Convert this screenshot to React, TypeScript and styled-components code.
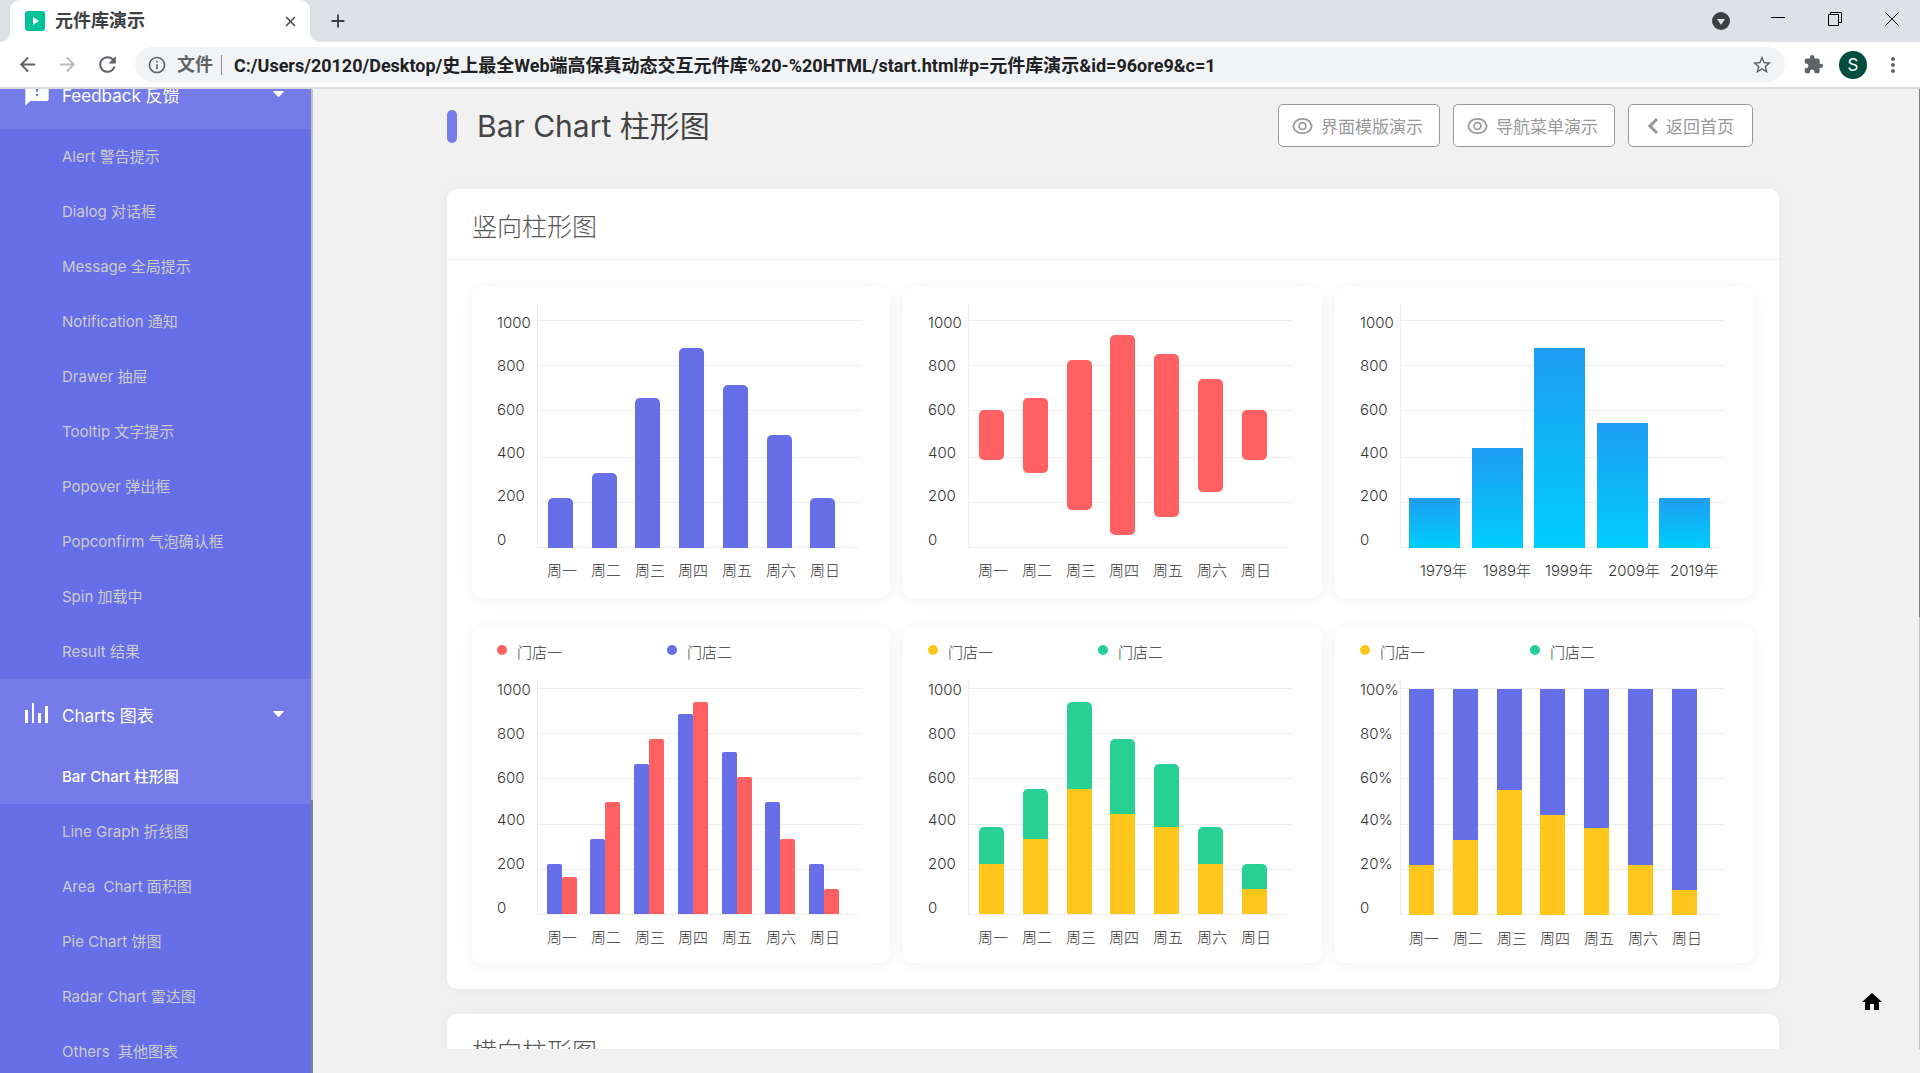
import React from "react";
import styled, { createGlobalStyle } from "styled-components";
import { MdArrowBack, MdArrowForward, MdRefresh, MdClose, MdAdd, MdInfoOutline, MdStarBorder, MdExtension, MdMoreVert, MdFeedback, MdHome } from "react-icons/md";

const ui = `Inter, "Noto Sans CJK SC", sans-serif`;
const chromeFont = `Roboto, "Noto Sans CJK SC", sans-serif`;
const blue = "#666ee8";
const red = "#ff6163";
const yellow = "#ffc71c";
const green = "#28d094";

const GlobalStyle = createGlobalStyle`
  * { box-sizing: border-box; }
  body { margin: 0; background: #f1f1f1; font-family: ${ui}; }
  button { font: inherit; color: inherit; border: 0; background: none; padding: 0; cursor: pointer; }
  a { color: inherit; text-decoration: none; }
  ul { list-style: none; margin: 0; padding: 0; }
  h1, h2 { margin: 0; font-weight: 400; }
  svg { display: block; flex: none; }
`;

const Browser = styled.div`
  display: flex;
  flex-direction: column;
  height: 100vh;
  overflow: hidden;
`;

const TabStrip = styled.div`
  display: flex;
  align-items: center;
  height: 42px;
  flex: none;
  padding: 0 0 0 10px;
  background: #dee1e6;
  color: #3c4043;
  font-family: ${chromeFont};
`;

const Tab = styled.div`
  position: relative;
  display: flex;
  align-items: center;
  gap: 10px;
  width: 300px;
  height: 42px;
  padding: 0 12px 0 15px;
  background: #fff;
  border-radius: 10px 10px 0 0;
  font-size: 18px;
  font-weight: 700;
  &::before, &::after {
    content: "";
    position: absolute;
    bottom: 0;
    width: 10px;
    height: 10px;
  }
  &::before { right: 100%; background: radial-gradient(circle at 0 0, transparent 10px, #fff 10px); }
  &::after { left: 100%; background: radial-gradient(circle at 100% 0, transparent 10px, #fff 10px); }
`;

const TabTitle = styled.span`
  flex: 1;
  line-height: 22px;
`;

const IconButton = styled.button<{ $w?: number }>`
  display: flex;
  align-items: center;
  justify-content: center;
  width: ${(p) => p.$w ?? 40}px;
  height: 32px;
  flex: none;
`;

const TabSearch = styled(IconButton)`
  margin-left: auto;
`;

const WindowControls = styled.div`
  display: flex;
  align-items: center;
  align-self: flex-start;
  height: 37px;
`;

const Toolbar = styled.div`
  display: flex;
  align-items: center;
  height: 47px;
  flex: none;
  padding: 0 7px;
  background: #fff;
  border-bottom: 2px solid #d9dbdf;
  color: #5f6368;
`;

const AddressBar = styled.form`
  display: flex;
  align-items: center;
  flex: 1;
  height: 35px;
  margin: 0 8px;
  padding: 0 12px;
  border-radius: 18px;
  background: #f1f3f4;
  font: 700 18px ${chromeFont};
`;

const Scheme = styled.label`
  padding: 0 8px 0 10px;
  margin-right: 12px;
  border-right: 1px solid #85888c;
  line-height: 20px;
`;

const UrlInput = styled.input`
  flex: 1;
  min-width: 0;
  height: 34px;
  padding: 0 0 2px;
  border: 0;
  outline: 0;
  background: none;
  color: #202124;
  font: 700 18px ${chromeFont};
`;

const Avatar = styled.button`
  width: 28px;
  height: 28px;
  margin: 0 6px;
  border-radius: 50%;
  background: #004d40;
  color: #fff;
  font-size: 17px;
`;

const Body = styled.div`
  display: flex;
  flex: 1;
  min-height: 0;
`;

const Sidebar = styled.nav`
  width: 313px;
  flex: none;
  overflow: hidden;
  border-right: 2px solid;
  border-image: linear-gradient(#c1c1c1 711px, #808080 711px) 1;
  background: ${blue};
`;

/* The menu is scrolled part of the way into the Feedback group. */
const Menu = styled.ul`
  margin-top: -30px;
`;

const GroupButton = styled.button`
  display: flex;
  align-items: center;
  width: 100%;
  height: 70px;
  padding: 0 27px 0 23px;
  background: #757cea;
  color: #fff;
  font-size: 17px;
`;

const GroupIcon = styled.span`
  display: flex;
  width: 39px;
`;

const GroupLabel = styled.span`
  flex: 1;
  text-align: left;
`;

const MenuLink = styled.a<{ $active?: boolean }>`
  display: block;
  height: 55px;
  padding-left: 62px;
  line-height: 55px;
  font-size: 15px;
  white-space: pre;
  color: ${(p) => (p.$active ? "#fff" : "#ccc")};
  font-weight: ${(p) => (p.$active ? 500 : 400)};
  background: ${(p) => (p.$active ? "#757cea" : "transparent")};
`;

const Main = styled.main`
  flex: 1;
  min-width: 0;
  margin-bottom: 24px;
  padding: 15px 140px 0 134px;
  overflow: hidden;
  border-right: 1px solid;
  border-image: linear-gradient(#7d7d7d 528px, #c1c1c1 528px) 1;
`;

const PageHeader = styled.header`
  display: flex;
  align-items: center;
  gap: 13px;
  height: 43px;
  margin-bottom: 42px;
  padding-right: 26px;
`;

const PageTitle = styled.h1`
  display: flex;
  align-items: center;
  gap: 20px;
  margin-right: auto;
  padding-top: 2px;
  font-size: 30px;
  font-weight: 400;
  line-height: 43px;
  color: #444;
  &::before {
    content: "";
    width: 10px;
    height: 33px;
    border-radius: 5px;
    background: #757cea;
  }
`;

const HeaderButton = styled.button<{ $back?: boolean }>`
  display: flex;
  align-items: center;
  gap: ${(p) => (p.$back ? 7 : 8)}px;
  height: 43px;
  padding: ${(p) => (p.$back ? "0 18px" : "0 16px 0 13px")};
  border: 1px solid #999;
  border-radius: 5px;
  background: #fff;
  color: #999;
  font-size: 17px;
`;

const Panel = styled.section`
  margin-bottom: 25px;
  border-radius: 10px;
  background: #fff;
  box-shadow: 0 0 12px rgba(0, 0, 0, 0.04);
`;

const PanelTitle = styled.h2`
  height: 71px;
  padding: 0 25px;
  border-bottom: 1px solid #ececec;
  font-size: 25px;
  font-weight: 300;
  line-height: 76px;
  color: #555;
`;

const ChartGrid = styled.div`
  display: grid;
  grid-template-columns: 418fr 419fr 419fr;
  gap: 29px 13px;
  padding: 27px 25px 26px;
`;

const ChartCard = styled.figure`
  margin: 0;
  border-radius: 10px;
  background: #fff;
  box-shadow: 0 2px 16px rgba(0, 0, 0, 0.06);
`;

const ChartSvg = styled.svg`
  font-family: ${ui};
  font-size: 15px;
  font-weight: 300;
  fill: #333;
`;

const HomeLink = styled.a`
  position: fixed;
  right: 36px;
  bottom: 59px;
  color: #000;
`;

const days = ["周一", "周二", "周三", "周四", "周五", "周六", "周日"];
const years = ["1979年", "1989年", "1999年", "2009年", "2019年"];
const thousand = ["1000", "800", "600", "400", "200", "0"];
const percent = ["100%", "80%", "60%", "40%", "20%", "0"];

type Bar = { x: number; y: number; w: number; h: number; fill: string; r?: number; round?: "top" | "all" };

function BarShape({ x, y, w, h, fill, r = 0, round = "top" }: Bar) {
  if (round === "all") return <rect x={x} y={y} width={w} height={h} rx={r} fill={fill} />;
  return <path d={`M${x} ${y + h}V${y + r}a${r} ${r} 0 0 1 ${r} ${-r}h${w - 2 * r}a${r} ${r} 0 0 1 ${r} ${r}V${y + h}z`} fill={fill} />;
}

type ChartProps = {
  name: string;
  bars: Bar[];
  yLabels?: string[];
  xLabels?: string[];
  xStart?: number;
  xStep?: number;
  xBase?: number;
  legend?: [string, string];
};

function Chart({ name, bars, yLabels = thousand, xLabels = days, xStart = 75, xStep = 43.8, xBase, legend }: ChartProps) {
  const lines = legend ? [61, 106, 151, 197, 242, 287] : [33, 78, 123, 170, 215, 260];
  const labels = legend ? [68, 112, 156, 198, 242, 286] : [41, 84, 128, 171, 214, 258];
  const height = legend ? 336 : 311;
  const base = xBase ?? (legend ? 316 : 289);
  return (
    <ChartCard>
      <ChartSvg width={418} height={height} role="img" aria-label={name}>
        {legend?.map((color, i) => (
          <g key={color}>
            <circle cx={30 + i * 170} cy={23} r={5} fill={color} />
            <text x={45 + i * 170} y={31}>{i ? "门店二" : "门店一"}</text>
          </g>
        ))}
        {lines.map((y, i) => <rect key={y} x={65} y={y} width={i === 5 ? 321 : 325} height={1} fill="#ededed" />)}
        <rect x={65} y={lines[0] - (legend ? 8 : 16)} width={1} height={legend ? 234 : 244} fill="#ededed" />
        {bars.map((bar, i) => <BarShape key={i} {...bar} />)}
        {yLabels.map((label, i) => <text key={label} x={25} y={labels[i]}>{label}</text>)}
        {xLabels.map((label, i) => <text key={label} x={Math.round(xStart + i * xStep)} y={base}>{label}</text>)}
      </ChartSvg>
    </ChartCard>
  );
}

const column = (bottom: number, w: number, fill: string, r: number) => (xs: number[], tops: number[]): Bar[] =>
  tops.map((y, i) => ({ x: xs[i], y, w, h: bottom - y, fill, r }));

const simple = column(261, 25, blue, 5)([76, 120, 163, 207, 251, 295, 338], [211, 186, 111, 61, 98, 148, 211]);
const slotX = [76, 120, 164, 207, 251, 295, 339];
const ranges: Bar[] = [[123, 173], [111, 186], [73, 223], [48, 248], [67, 230], [92, 205], [123, 173]].map(([a, b], i) => ({
  x: slotX[i], y: a, w: 25, h: b - a, fill: red, r: 5, round: "all",
}));
const wide = column(261, 51, "url(#sky)", 0)([74, 137, 199, 262, 324], [211, 161, 61, 136, 211]);
const pairX = [75, 118, 162, 206, 250, 293, 337];
const grouped = [
  ...column(287, 15, blue, 2)(pairX, [237, 212, 137, 87, 125, 175, 237]),
  ...column(287, 15, red, 2)(pairX.map((x) => x + 15), [250, 175, 112, 75, 150, 212, 262]),
];
const stacked = [
  ...column(287, 25, green, 5)(slotX, [200, 162, 75, 112, 137, 200, 237]),
  ...column(287, 25, yellow, 0)(slotX, [237, 212, 162, 187, 200, 237, 262]),
];
const shareX = [74, 118, 162, 205, 249, 293, 337];
const share = [
  ...column(288, 25, blue, 0)(shareX, [62, 62, 62, 62, 62, 62, 62]),
  ...column(288, 25, yellow, 0)(shareX, [238, 213, 163, 188, 201, 238, 263]),
];

const Caret = () => <svg width="11" height="6" fill="#fff"><path d="M1 0h9q1.400 0 .5 1L6.300 5.500q-.8.800-1.600 0L.5 1Q-.4 0 1 0z" /></svg>;
const BarsIcon = () => (
  <svg width="28" height="24" fill="#fff">
    <path d="M2 8h3v13H2zM9 1h2v20H9zM15 11h3v10h-3zM22 4h3v17h-3z" />
  </svg>
);
const Eye = () => (
  <svg width="21" height="18" viewBox="0 0 21 18" fill="none" stroke="#999" strokeWidth="1.700">
    <path d="M1.200 9C2.200 4.500 6 1.800 10.500 1.800S18.800 4.500 19.800 9c-1 4.500-4.800 7.200-9.300 7.200S2.200 13.500 1.200 9z" />
    <circle cx="10.500" cy="9" r="3.400" />
  </svg>
);
const Chevron = () => <svg width="12" height="18" fill="none" stroke="#999" strokeWidth="3"><path d="M10 2L3 9l7 7" /></svg>;

const feedback = ["Alert 警告提示", "Dialog 对话框", "Message 全局提示", "Notification 通知", "Drawer 抽屉", "Tooltip 文字提示", "Popover 弹出框", "Popconfirm 气泡确认框", "Spin 加载中", "Result 结果"];
const charts = ["Bar Chart 柱形图", "Line Graph 折线图", "Area  Chart 面积图", "Pie Chart 饼图", "Radar Chart 雷达图", "Others  其他图表"];

function MenuGroup({ icon, label, items, active }: { icon: React.ReactNode; label: string; items: string[]; active?: string }) {
  return (
    <li>
      <GroupButton type="button" aria-expanded="true">
        <GroupIcon>{icon}</GroupIcon>
        <GroupLabel>{label}</GroupLabel>
        <Caret />
      </GroupButton>
      <ul>
        {items.map((item) => (
          <li key={item}><MenuLink href="#" $active={item === active}>{item}</MenuLink></li>
        ))}
      </ul>
    </li>
  );
}

export default function App() {
  return (
    <Browser>
      <GlobalStyle />
      <TabStrip>
        <Tab>
          <svg width="20" height="20"><rect width="20" height="20" rx="3" fill="#00c39a" /><path d="M8 6l6 4-6 4z" fill="#fff" /></svg>
          <TabTitle>元件库演示</TabTitle>
          <IconButton $w={16} aria-label="关闭标签页"><MdClose size={17} /></IconButton>
        </Tab>
        <IconButton $w={55} aria-label="新标签页"><MdAdd size={22} /></IconButton>
        <TabSearch $w={56} aria-label="搜索标签页">
          <svg width="18" height="18"><circle cx="9" cy="9" r="9" fill="#3c4043" /><path d="M5 7h8l-4 6z" fill="#dee1e6" /></svg>
        </TabSearch>
        <WindowControls>
          <IconButton $w={57} aria-label="最小化"><svg width="14" height="14" stroke="#000"><path d="M0 5.500h14" /></svg></IconButton>
          <IconButton $w={57} aria-label="还原">
            <svg width="14" height="14" fill="none" stroke="#000"><path d="M.5 2.500h10v11H.5zM2.500 2V.5h11v10H11" /></svg>
          </IconButton>
          <IconButton $w={57} aria-label="关闭"><svg width="14" height="14" stroke="#000"><path d="M.5 .5l13 13M13.500 .5l-13 13" /></svg></IconButton>
        </WindowControls>
      </TabStrip>
      <Toolbar>
        <IconButton aria-label="后退"><MdArrowBack size={23} /></IconButton>
        <IconButton aria-label="前进"><MdArrowForward size={23} color="#babcbe" /></IconButton>
        <IconButton aria-label="刷新"><MdRefresh size={25} /></IconButton>
        <AddressBar onSubmit={(e) => e.preventDefault()}>
          <MdInfoOutline size={20} />
          <Scheme htmlFor="url">文件</Scheme>
          <UrlInput id="url" defaultValue="C:/Users/20120/Desktop/史上最全Web端高保真动态交互元件库%20-%20HTML/start.html#p=元件库演示&id=96ore9&c=1" />
          <MdStarBorder size={22} />
        </AddressBar>
        <IconButton aria-label="扩展程序"><MdExtension size={21} /></IconButton>
        <Avatar>S</Avatar>
        <IconButton aria-label="菜单"><MdMoreVert size={24} /></IconButton>
      </Toolbar>
      <Body>
        <Sidebar>
          <Menu>
            <MenuGroup icon={<MdFeedback size={28} />} label="Feedback 反馈" items={feedback} />
            <MenuGroup icon={<BarsIcon />} label="Charts 图表" items={charts} active="Bar Chart 柱形图" />
          </Menu>
        </Sidebar>
        <Main>
          <PageHeader>
            <PageTitle>Bar Chart 柱形图</PageTitle>
            <HeaderButton><Eye />界面模版演示</HeaderButton>
            <HeaderButton><Eye />导航菜单演示</HeaderButton>
            <HeaderButton $back><Chevron />返回首页</HeaderButton>
          </PageHeader>
          <Panel>
            <PanelTitle>竖向柱形图</PanelTitle>
            <ChartGrid>
              <Chart name="柱形图" bars={simple} />
              <Chart name="区间柱形图" bars={ranges} />
              <Chart name="年度柱形图" bars={wide} xLabels={years} xStart={85} xStep={62.5} />
              <Chart name="分组柱形图" bars={grouped} legend={[red, blue]} />
              <Chart name="堆叠柱形图" bars={stacked} legend={[yellow, green]} />
              <Chart name="百分比柱形图" bars={share} legend={[yellow, green]} yLabels={percent} xStart={74} xBase={317} />
            </ChartGrid>
          </Panel>
          <Panel>
            <PanelTitle>横向柱形图</PanelTitle>
          </Panel>
        </Main>
      </Body>
      <HomeLink href="#" aria-label="首页"><MdHome size={24} /></HomeLink>
      <svg width="0" height="0" aria-hidden="true">
        <linearGradient id="sky" x1="0" y1="0" x2="0" y2="1">
          <stop offset="0" stopColor="#1e9df2" />
          <stop offset="1" stopColor="#00ceff" />
        </linearGradient>
      </svg>
    </Browser>
  );
}
